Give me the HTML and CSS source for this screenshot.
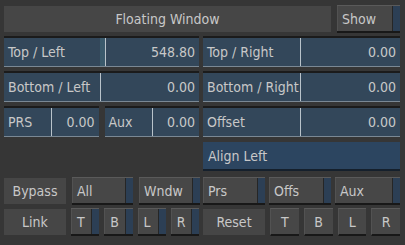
FILE: index.html
```html
<!DOCTYPE html>
<html lang="en">
<head>
  <meta charset="UTF-8" />
  <title>Floating Window</title>
  <link rel="stylesheet" href="styles.css">
</head>
<body>
  <div class="panel">
    <div class="top-row">
      <div class="title">Floating Window</div>
      <div class="btn show"><span>Show</span><i></i></div>
    </div>

    <div class="grid">
      <div class="field active">
        <span class="name">Top / Left</span><span class="hl"></span><span class="value">548.80</span>
      </div>
      <div class="field">
        <span class="name w98">Top / Right</span><span class="value">0.00</span>
      </div>

      <div class="field">
        <span class="name w96">Bottom / Left</span><span class="value">0.00</span>
      </div>
      <div class="field">
        <span class="name w98">Bottom / Right</span><span class="value">0.00</span>
      </div>

      <div class="pair">
        <div class="field">
          <span class="name w47">PRS</span><span class="value">0.00</span>
        </div>
        <div class="field">
          <span class="name w47">Aux</span><span class="value">0.00</span>
        </div>
      </div>
      <div class="field">
        <span class="name w98">Offset</span><span class="value">0.00</span>
      </div>

      <div></div>
      <div class="align">Align Left</div>

      <div class="btn-row">
        <div class="label">Bypass</div>
        <div class="btn"><span>All</span><i></i></div>
        <div class="btn"><span>Wndw</span><i></i></div>
      </div>
      <div class="btn-row three">
        <div class="btn"><span>Prs</span><i></i></div>
        <div class="btn"><span>Offs</span><i></i></div>
        <div class="btn"><span>Aux</span><i></i></div>
      </div>

      <div class="btn-row link">
        <div class="label">Link</div>
        <div class="btn small"><span>T</span><i></i></div>
        <div class="btn small"><span>B</span><i></i></div>
        <div class="btn small"><span>L</span><i></i></div>
        <div class="btn small"><span>R</span><i></i></div>
      </div>
      <div class="btn-row link">
        <div class="label">Reset</div>
        <div class="btn flat">T</div>
        <div class="btn flat">B</div>
        <div class="btn flat">L</div>
        <div class="btn flat">R</div>
      </div>
    </div>
  </div>
</body>
</html>
```

FILE: styles.css
```css
html, body {
  margin: 0;
  padding: 0;
}

body {
  background: #363636;
  font-family: "DejaVu Sans Condensed", "DejaVu Sans", sans-serif;
  font-size: 14px;
  color: #c8c8c8;
  width: 405px;
  height: 245px;
  overflow: hidden;
}

.panel {
  padding: 5px 5px 0 4px;
}

.top-row {
  display: flex;
  gap: 6px;
  height: 29px;
}

.title {
  flex: 1;
  margin-top: 1px;
  height: 26px;
  background: #464646;
  display: flex;
  align-items: center;
  justify-content: center;
}

.show {
  width: 63px;
  height: 27px;
}

.grid {
  display: grid;
  grid-template-columns: 195px 197px;
  grid-template-rows: 31px 31px 31px 29px 28px 28px;
  column-gap: 4px;
  row-gap: 4px;
  margin-top: 2px;
}

.grid > :nth-child(7), .grid > :nth-child(8) {
  margin-top: 1px;
}

.grid > :nth-child(9), .grid > :nth-child(10) {
  margin-top: 3px;
}

.grid > :nth-child(11), .grid > :nth-child(12) {
  margin-top: 2px;
}

/* numeric fields */
.field {
  display: flex;
  min-width: 0;
  background: #33475a;
  border-top: 2px solid #1b1b1b;
  border-bottom: 1px solid #7a8894;
  box-sizing: border-box;
  height: 31px;
}

.field .name {
  width: 96px;
  flex: none;
  padding-left: 4px;
  box-sizing: border-box;
  border-right: 1px solid #b9c3ca;
  display: flex;
  align-items: center;
  white-space: nowrap;
}

.field .name.w96 { width: 97px; }
.field .name.w98 { width: 98px; }
.field .name.w47 { width: 48px; }

.field.active .name {
  width: 101px;
  border-right: none;
  background: linear-gradient(to right, #33475a 96px, #3b5a6c 96px);
}

.field.active .hl {
  width: 1px;
  background: #b9c3ca;
}

.field .value {
  flex: 1;
  min-width: 0;
  display: flex;
  align-items: center;
  justify-content: flex-end;
  padding-right: 4px;
}

.pair {
  display: flex;
  gap: 6px;
}

.pair .field {
  flex: 1;
}

.align {
  background: #2c4560;
  border-bottom: 2px solid #15202c;
  height: 29px;
  box-sizing: border-box;
  display: flex;
  align-items: center;
  padding-left: 5px;
}

/* buttons */
.btn-row {
  display: grid;
  grid-template-columns: 62px 61px 61px;
  column-gap: 6px;
}

.btn-row.three {
  grid-template-columns: 62px 62px 1fr;
  column-gap: 4px;
}

.btn-row.link {
  grid-template-columns: 62px 1fr 1fr 1fr 1fr;
  column-gap: 5px;
}

.label {
  background: #464646;
  display: flex;
  align-items: center;
  justify-content: center;
  height: 26px;
  margin-top: 1px;
}

.btn {
  display: flex;
  background: #474747;
  border-top: 1px solid #5a5a5a;
  border-bottom: 2px solid #181818;
  height: 28px;
  box-sizing: border-box;
}

.btn span {
  flex: 1;
  display: flex;
  align-items: center;
  padding-left: 4px;
  border-left: 1px solid #525252;
}

.btn i {
  width: 7px;
  background: #2c3f55;
  border-left: 1px solid #262626;
}

.btn.small span {
  padding-left: 5px;
}

.btn.flat {
  justify-content: center;
  align-items: center;
  border-left: 1px solid #525252;
}
```
